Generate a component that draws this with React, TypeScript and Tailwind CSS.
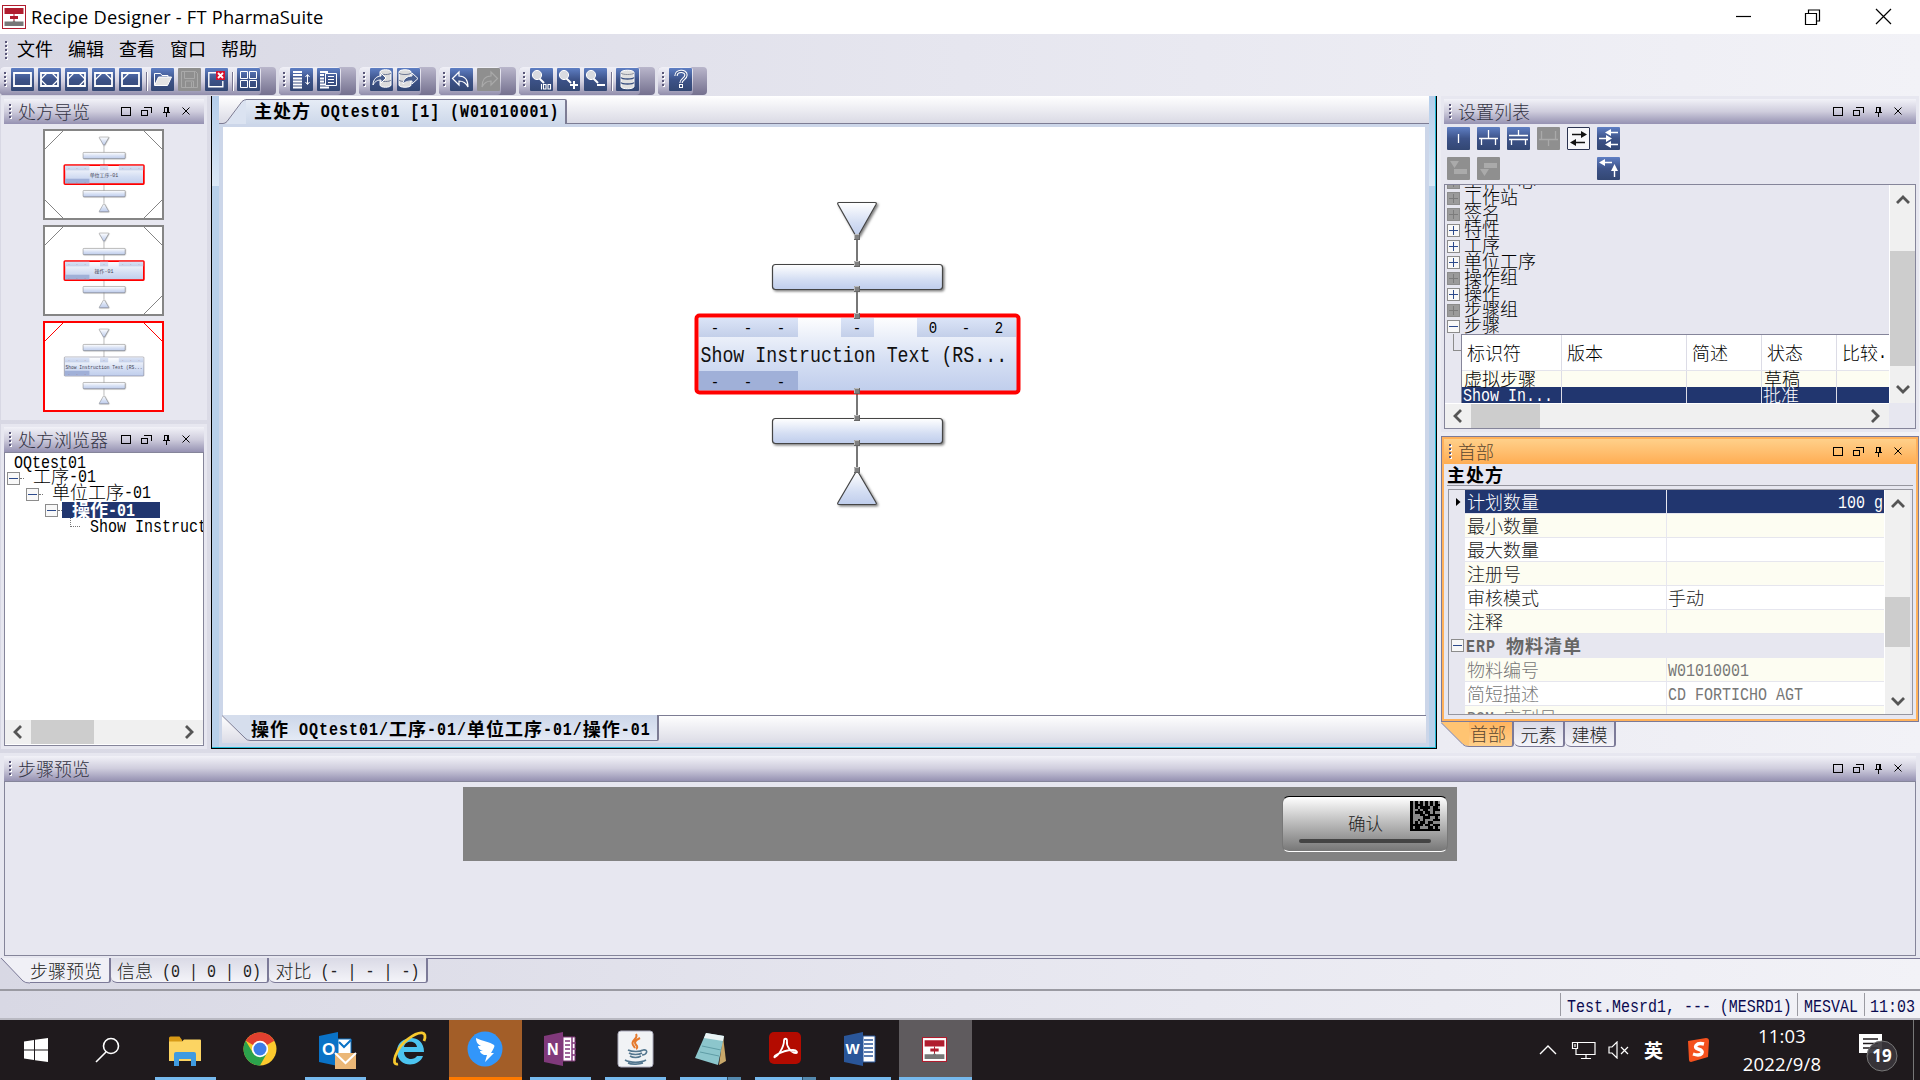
import React from "react";

const CJK_SPLIT = /([\u2e80-\u9fff\uff00-\uffef]+)/;

/* Mixed text: full-width glyphs at 1em, tall narrow half-width glyphs at exactly half of that advance. */
function T({ children }: { children: string }) {
  return (
    <span className="inline-block -translate-y-px whitespace-pre">
      {children.split(CJK_SPLIT).map((part, i) =>
        part === "" ? null : i % 2 === 1 ? (
          <span key={i}>{part}</span>
        ) : (
          <span
            key={i}
            className="inline-block origin-[50%_70%] -translate-y-px scale-y-[1.17] text-[0.8333em] font-['Liberation_Mono','Noto_Sans_CJK_SC',monospace]"
          >
            {part}
          </span>
        )
      )}
    </span>
  );
}

function Grip({ h = 18 }: { h?: number }) {
  return (
    <svg width="3" height={h} className="shrink-0" shapeRendering="crispEdges">
      {Array.from({ length: Math.floor(h / 4) }, (_, i) => (
        <g key={i}>
          <rect x="1" y={i * 4 + 1} width="2" height="2" fill="#fff" />
          <rect x="0" y={i * 4} width="2" height="2" fill="#5a5779" />
        </g>
      ))}
    </svg>
  );
}

function PanelControls() {
  return (
    <svg width="69" height="12" className="mr-[14px] shrink-0" fill="none" stroke="#000" shapeRendering="crispEdges">
      <rect x="0.5" y="1.5" width="9" height="8" />
      <path d="M20.5 4.5h6v5h-6zM23 1.5h7v5" />
      <path d="M42 6.5h7M43.5 6V1.5h4V6M46.5 1.5V6M45.5 7v4" />
      <path d="M61.5 1.5l7 7M68.5 1.5l-7 7" shapeRendering="auto" />
    </svg>
  );
}

function PanelHeader({ title, orange = false }: { title: string; orange?: boolean }) {
  return (
    <div
      className={
        "flex h-[25px] shrink-0 items-center pl-[5px] text-[18px] leading-[24px] " +
        (orange
          ? "bg-linear-to-b from-[#ffd08a] to-[#ffad52] text-[#5a4630]"
          : "bg-linear-to-b from-[#f2f2f8] via-[#cfcddd] to-[#9692b2] text-[#333344]")
      }
    >
      <Grip h={16} />
      <div className="ml-[6px] grow font-light">
        <T>{title}</T>
      </div>
      <PanelControls />
    </div>
  );
}

function Arrow({ dir, className = "" }: { dir: "left" | "right" | "up" | "down"; className?: string }) {
  const d = {
    left: "M9 1L3 7l6 6",
    right: "M4 1l6 6-6 6",
    up: "M1 10l6-6 6 6",
    down: "M1 4l6 6 6-6",
  }[dir];
  return (
    <svg width="14" height="14" className={"shrink-0 " + className} fill="none" stroke="#555" strokeWidth="2.8">
      <path d={d} />
    </svg>
  );
}

/* ---------- Toolbar ---------- */

const toolIcons: Record<string, React.ReactNode> = {
  rect: <path d="M3 5h17v13H3z" strokeWidth="1.8" />,
  corners4: (
    <>
      <path d="M3 5h17v13H3z" strokeWidth="1.8" />
      <path d="M3 11l6-6M14 5l6 6M20 12l-6 6M9 18l-6-6" strokeWidth="1.2" />
    </>
  ),
  corners3: (
    <>
      <path d="M3 5h17v13H3z" strokeWidth="1.8" />
      <path d="M3 11l6-6M14 5l6 6M20 12l-6 6" strokeWidth="1.2" />
    </>
  ),
  corners2: (
    <>
      <path d="M3 5h17v13H3z" strokeWidth="1.8" />
      <path d="M3 12l7-7M13 5l7 7" strokeWidth="1.2" />
    </>
  ),
  corners1: (
    <>
      <path d="M3 5h17v13H3z" strokeWidth="1.8" />
      <path d="M3 12l7-7" strokeWidth="1.2" />
    </>
  ),
  open: (
    <>
      <path d="M3.5 17V5.5h6l1.5 2h6v2" />
      <path d="M3.5 17.5l4-8.5h13l-4 8.5z" fill="#e4e4e4" />
    </>
  ),
  save: (
    <g stroke="#a9a9a9">
      <path d="M3.5 3.5h14l2 2v14h-16z" />
      <path d="M6.5 3.5v7h10v-7M7.5 19v-6h8v6M13.5 14v5" />
    </g>
  ),
  close: (
    <>
      <path d="M12 4.8H3.8v14h14V13" strokeWidth="1.4" />
      <rect x="11" y="3" width="9" height="9" fill="#d5122f" stroke="none" />
      <path d="M13 5l5 5M18 5l-5 5" strokeWidth="1.8" />
    </>
  ),
  grid: <path d="M3.5 3.5h7v7h-7zM12.5 3.5h7v7h-7zM3.5 12.5h7v7h-7zM12.5 12.5h7v7h-7z" />,
  sortList: (
    <>
      <path d="M3 4h9M3 7h9M3 10.5h9M3 13.5h9M3 16.5h9M3 19.5h9" strokeWidth="1.8" />
      <path d="M17.5 7v9M15.5 9l2-2.5 2 2.5M15.5 14l2 2.5 2-2.5" />
    </>
  ),
  copyList: (
    <>
      <path d="M3 4h8M3 7h4M3 10.5h4M3 13.5h4M3 16.5h5M3 19.5h9" strokeWidth="1.8" />
      <path d="M8.5 5.5h11v12h-11zM11 8.5h6M11 11.5h6M11 14.5h6" />
    </>
  ),
  dbIn: (
    <>
      <path d="M10 4v13c0 3 11 3 11 0V4c0-3-11-3-11 0z" fill="#dcdcdc" />
      <path d="M10 5c1 2 10 2 11 0M10 12c1 2 10 2 11 0" stroke="#6d7894" />
      <path d="M3 17c0-6 4-9 8-9V5l5 5-5 5v-3c-3 0-6 1-8 5z" fill="#4a5f8f" />
    </>
  ),
  dbOut: (
    <>
      <path d="M2 4v13c0 3 12 3 12 0V4c0-3-12-3-12 0z" fill="#dcdcdc" />
      <path d="M2 5c1 2 11 2 12 0M2 12c1 2 11 2 12 0" stroke="#6d7894" />
      <path d="M6 16c0-5 4-8 9-8V5l6 5.5-6 5.5v-3c-3 0-6 0-9 3z" fill="#4a5f8f" />
    </>
  ),
  undo: <path d="M2.5 10.5L9 4v4c6 0 9 4 9 11-2-4-4-6-9-6v4z" strokeWidth="1.2" />,
  redo: <path d="M20.5 10.5L14 4v4c-6 0-9 4-9 11 2-4 4-6 9-6v4z" stroke="#a9a9a9" strokeWidth="1.2" />,
  zoom100: (
    <>
      <path d="M9 10l5 5" strokeWidth="2" />
      <circle cx="7" cy="7" r="4.6" fill="#d9dbe0" />
      <path d="M11.5 16v5.5M13.5 16.5h2.5v4.5h-2.5zM18 16.5h2.5v4.5h-2.5z" strokeWidth="1.1" />
    </>
  ),
  zoomIn: (
    <>
      <path d="M9 10l5 5" strokeWidth="2" />
      <circle cx="7" cy="7" r="4.6" fill="#d9dbe0" />
      <path d="M17 13v8M13 17h8" strokeWidth="2" />
    </>
  ),
  zoomOut: (
    <>
      <path d="M9 10l5 5" strokeWidth="2" />
      <circle cx="7" cy="7" r="4.6" fill="#d9dbe0" />
      <path d="M13 17h8" strokeWidth="2" />
    </>
  ),
  db: (
    <>
      <path d="M5 4.5v14c0 3 13 3 13 0v-14c0-3-13-3-13 0z" fill="#e0e0e0" />
      <path d="M5 5c1 2 12 2 13 0" stroke="#8a8f9c" />
      <path d="M5 9.5c1 2 12 2 13 0M5 14.5c1 2 12 2 13 0" stroke="#3c5282" strokeWidth="1.3" />
    </>
  ),
  help: (
    <>
      <path d="M7 8c0-6 10-6 10-1 0 4-5 4-5 8" strokeWidth="3.4" />
      <path d="M7 8c0-6 10-6 10-1 0 4-5 4-5 8" strokeWidth="1.2" stroke="#40578c" />
      <rect x="10.5" y="16.5" width="3" height="3" />
    </>
  ),
  tBar: <path d="M11.5 7v9" strokeWidth="1.3" />,
  tFork: <path d="M11.5 3v8M2 11.5h19M4.5 11v7M18.5 11v7" strokeWidth="1.3" />,
  tFork2: <path d="M11.5 3v5M2 8.5h19M2 12.5h19M4.5 12v6M18.5 12v6" strokeWidth="1.3" />,
  tJoin: <path d="M4.5 4v8M18.5 4v8M2 12.5h19M11.5 12v7" strokeWidth="1.3" stroke="#a9a9a9" />,
  swap: (
    <g stroke="#111" fill="#111">
      <path d="M5 7.5h10M18 15.5H9" strokeWidth="1.6" />
      <path d="M14 4l6 3.5-6 3.5zM9 12l-6 3.5 6 3.5z" stroke="none" />
    </g>
  ),
  merge: (
    <g>
      <path d="M13 5.5h8M2 11.5h8M13 17.5h8" strokeWidth="1.4" />
      <path d="M14 2l-6 3.5 6 3.5zM9 8l6 3.5-6 3.5zM14 14l-6 3.5 6 3.5z" fill="#fff" stroke="none" />
    </g>
  ),
  turn: (
    <g>
      <path d="M7 5.5h8M17.5 12v8" strokeWidth="1.4" />
      <path d="M8 2L2 5.5 8 9zM14 14l3.5-7 3.5 7z" fill="#fff" stroke="none" />
    </g>
  ),
  triBox: <path d="M3 4h9l-4.5 7zM7 12h13v5H7z" fill="#aaa" stroke="none" />,
  boxTri: <path d="M7 6h13v5H7zM3 12h9l-4.5 7z" fill="#aaa" stroke="none" />,
};

function Tool({ icon, kind = "blue" }: { icon: string; kind?: "blue" | "gray" | "white" }) {
  const bg = {
    blue: "bg-linear-to-b from-[#5f7fc4] via-[#3d5389] to-[#334773]",
    gray: "bg-[#8f8f8f]",
    white: "bg-[#f7f7fa] border border-[#2b3350]",
  }[kind];
  return (
    <div className={"flex h-[23px] w-[23px] shrink-0 items-center justify-center overflow-hidden rounded-[1px] " + bg}>
      <svg width="23" height="23" className="shrink-0" fill="none" stroke="#fff" strokeWidth="1">
        {toolIcons[icon]}
      </svg>
    </div>
  );
}

function ToolGroup({ children, tail = "w-[13px]" }: { children: React.ReactNode; tail?: string }) {
  return (
    <div className="mr-[3px] flex h-[28px] shrink-0 rounded-[4px] bg-linear-to-b from-[#b9b6cb] to-[#75718f]">
      <div className="flex rounded-[4px] bg-linear-to-b from-[#f0f0f7] via-[#d5d3e2] to-[#928eac] pt-px">
        <div className="mt-1 ml-[4px] mr-[4px]">
          <Grip h={18} />
        </div>
        <div className="flex gap-1 pr-px">{children}</div>
      </div>
      <div className={tail} />
    </div>
  );
}

function ToolSep() {
  return <div className="-mr-px mt-1 h-[19px] w-[2px] border-l border-[#77748f] bg-white" />;
}

/* ---------- Recipe diagram ---------- */

function Shapes({ id, selected, label, small }: { id: string; selected: boolean; label: string; small?: boolean }) {
  const g = `url(#${id}g)`;
  const cells = [
    [715, 327, "-"],
    [748, 327, "-"],
    [781, 327, "-"],
    [857, 327, "-"],
    [933, 327, small ? "-" : "0"],
    [966, 327, "-"],
    [999, 327, small ? "-" : "2"],
    [715, 381, "-"],
    [748, 381, "-"],
    [781, 381, "-"],
  ] as const;
  return (
    <g>
      <defs>
        <linearGradient id={id + "g"} x1="0" y1="0" x2="0" y2="1">
          <stop offset="0" stopColor="#fff" />
          <stop offset="0.6" stopColor="#d4def3" />
          <stop offset="1" stopColor="#bfcdec" />
        </linearGradient>
        <linearGradient id={id + "c"} x1="0" y1="0" x2="0" y2="1">
          <stop offset="0" stopColor="#dbe4f7" />
          <stop offset="1" stopColor="#c3cfe9" />
        </linearGradient>
        <filter id={id + "s"} x="-10%" y="-20%" width="120%" height="150%">
          <feDropShadow dx="1.5" dy="1.5" stdDeviation="1" floodOpacity="0.5" />
        </filter>
      </defs>
      <g fill={g} stroke="#444" strokeWidth="1.2" filter={`url(#${id}s)`}>
        <path d="M839 202.5h36q2 0 1 2l-17 30q-2 3-4 0l-17-30q-1-2 1-2z" />
        <rect x="772.5" y="264.5" width="170" height="25" rx="3" />
        <rect x="772.5" y="418.5" width="170" height="25" rx="3" />
        <path d="M839 504.5h36q2 0 1-2l-17-29q-2-3-4 0l-17 29q-1 2 1 2z" />
      </g>
      <path d="M857 236v28M857 290v26M857 391v28M857 443v28" stroke="#777" strokeWidth="2" />
      <rect
        x="696.5"
        y="315.5"
        width="322"
        height="77"
        rx="3"
        fill={g}
        stroke={selected ? "#f00" : "#667"}
        strokeWidth={selected ? (small ? 7 : 4) : 2}
      />
      <g fill={`url(#${id}c)`}>
        <rect x="699" y="318" width="99" height="19" />
        <rect x="841" y="318" width="33" height="19" />
        <rect x="917" y="318" width="99" height="19" />
      </g>
      <rect x="699" y="371" width="99" height="19" fill="#a0b0d8" />
      <g fontFamily="'Liberation Mono','Noto Sans CJK SC',monospace" fill="#111">
        {cells.map(([x, y, s], i) => (
          <text
            key={i}
            transform={`translate(${x} ${y + 6}) scale(1 1.15)`}
            fontSize="14"
            textAnchor="middle"
            fill={small ? "#a66" : "#000"}
          >
            {s}
          </text>
        ))}
        {small ? (
          <text x="857" y="362" fontSize={label.length > 12 ? 18.6 : 20} textAnchor="middle" fill="#445">
            {label}
          </text>
        ) : (
          <text transform="translate(700.5 362) scale(1 1.17)" fontSize="18.25">
            {label}
          </text>
        )}
      </g>
      {!small &&
        [237, 264, 289, 316, 391, 418, 443, 470].map((y) => (
          <g key={y}>
            <rect x="854.5" y={y - 2.5} width="5" height="5" fill="#808080" stroke="#666" />
            <path d={`M854.5 ${y + 2}v-4.5h4.5`} stroke="#bbb" fill="none" />
          </g>
        ))}
    </g>
  );
}

function Thumb({ id, label, corners, selected }: { id: string; label: string; corners: string; selected?: boolean }) {
  return (
    <div className={"h-[91px] w-[121px] border-2 bg-white " + (selected ? "border-[#ff0000]" : "border-[#858585]")}>
      <svg width="117" height="87" viewBox="2 2 117 87">
        <path d={corners} stroke={selected ? "#f00" : "#858585"} fill="none" />
        <g transform="translate(-150.7 -41.9) scale(0.247)">
          <Shapes id={id} label={label} selected={!selected} small />
        </g>
      </svg>
    </div>
  );
}

/* ---------- Trees and grids ---------- */

function Box({ kind }: { kind: "plus" | "minus" | "off" }) {
  return (
    <svg width="13" height="13" className="shrink-0" shapeRendering="crispEdges">
      <rect x="0.5" y="0.5" width="12" height="12" fill={kind === "off" ? "#9b9b9b" : "#f8f8f8"} stroke="#8c8c8c" />
      <path d={kind === "minus" ? "M2 6.5h9" : "M2 6.5h9M6.5 2v9"} stroke={kind === "off" ? "#7c7c7c" : "#2c4a8c"} />
    </svg>
  );
}

const treeRows: [string, "plus" | "minus" | "off"][] = [
  ["工作中心", "off"],
  ["工作站", "off"],
  ["签名", "off"],
  ["特性", "plus"],
  ["工序", "plus"],
  ["单位工序", "plus"],
  ["操作组", "off"],
  ["操作", "plus"],
  ["步骤组", "off"],
  ["步骤", "minus"],
];

const props: [string, string][] = [
  ["最小数量", ""],
  ["最大数量", ""],
  ["注册号", ""],
  ["审核模式", "手动"],
  ["注释", ""],
];

function PropRow({ name, value, tint, gray }: { name: string; value: string; tint: boolean; gray?: boolean }) {
  const bg = tint ? "bg-[#fdfdf2]" : "bg-white";
  return (
    <div className={"flex h-[24px] shrink-0 gap-px border-b border-[#e6e6ee] " + (gray ? "text-[#777]" : "text-[#222]")}>
      <div className={"w-[201px] pl-[2px] " + bg}>
        <T>{name}</T>
      </div>
      <div className={"grow pl-px " + bg}>
        <T>{value}</T>
      </div>
    </div>
  );
}

function SmallTab({ label, w, active }: { label: string; w: string; active?: boolean }) {
  return (
    <div
      className={
        "h-[25px] shrink-0 rounded-br-[3px] border-r-2 border-b border-[#7c7a98] text-center text-[18px] leading-[26px] font-light text-[#222] " +
        w +
        (active ? " bg-[#f0f0f6]" : " rounded-bl-[6px] bg-linear-to-b from-[#dadae6] to-[#f4f4f9]")
      }
    >
      <T>{label}</T>
    </div>
  );
}

/* ---------- Taskbar ---------- */

function RecipeLogo({ size }: { size: number }) {
  return (
    <svg width={size} height={size} viewBox="0 0 24 24">
      <rect x="0.5" y="0.5" width="23" height="23" fill="#fff" stroke="#b01c2e" />
      <path d="M2.5 3h19v6h-19zM8 11h8v3H8z" fill="#b01c2e" />
      <path d="M11.5 9h1v8h-1z" fill="#b01c2e" />
      <path d="M2.5 16.5h8l1.5-1 1.5 1h8V21h-19z" fill="#777" />
    </svg>
  );
}

const F = "Liberation Sans";
const taskIcons: Record<string, React.ReactNode> = {
  folder: (
    <>
      <path d="M1 6q0-1.5 1.5-1.5h9L14 8v3H1z" fill="#d89a16" />
      <path d="M1 9.5h13l2-2h16q1 0 1 1V29H1z" fill="#fcd462" />
      <path d="M6 34V22q0-2 2-2h18q2 0 2 2v12h-5v-7H11v7z" fill="#3f9be0" />
    </>
  ),
  chrome: (
    <>
      <circle cx="17" cy="17" r="16.5" fill="#fbc92d" />
      <path d="M17 17L2.7 8.8A16.5 16.5 0 0131.3 8.8z" fill="#e0402f" />
      <path d="M2.7 8.8A16.5 16.5 0 0017 33.5l7-12.4-7 3-7-3z" fill="#2ba24c" />
      <circle cx="17" cy="17" r="8.2" fill="#fff" />
      <circle cx="17" cy="17" r="6.5" fill="#3d7de8" />
    </>
  ),
  outlook: (
    <>
      <path d="M1 4l19-4v34L1 30z" fill="#0a72c6" />
      <path d="M20 7h13v18H20z" fill="#fff" stroke="#0a72c6" />
      <path d="M21 10l5 5 7-7" stroke="#0a72c6" strokeWidth="2" fill="none" />
      <text x="4" y="23" fontSize="17" fontWeight="bold" fill="#fff" fontFamily={F}>O</text>
      <path d="M17 21h21v16H17z" fill="#ebb777" />
      <path d="M17 21l10.5 10L38 21" stroke="#fff" strokeWidth="2" fill="none" />
    </>
  ),
  ie: (
    <>
      <path d="M31 20H11c0 8 10 9 13 4h6C26 36 4 36 4 19 4 3 31 0 31 20zM11 15h13c-1-7-12-7-13 0z" fill="#4cc4f0" />
      <path d="M5 32C-3 34 3 16 15 7S35-1 31 9" stroke="#f7c92e" strokeWidth="2.8" fill="none" />
    </>
  ),
  ding: (
    <>
      <circle cx="17" cy="17" r="17.5" fill="#3296fa" />
      <path d="M8 6c6 3 14 4 18 7 1 1 0 3-3 8h3L17 30l2-7h-3c-3-1-4-3-4-4l3 0c-4-1-5-4-5-5h3C9 12 8 9 8 6z" fill="#fff" />
    </>
  ),
  onenote: (
    <>
      <path d="M1 4l19-4v34L1 30z" fill="#80397b" />
      <path d="M20 5h12v24H20z" fill="#fff" stroke="#80397b" />
      <path d="M22 9h5M22 13h5M22 17h5M22 21h5M22 25h5M29 5v24M29 11h4M29 17h4M29 23h4" stroke="#80397b" strokeWidth="1.5" />
      <text x="4" y="23" fontSize="16" fontWeight="bold" fill="#fff" fontFamily={F}>N</text>
    </>
  ),
  java: (
    <>
      <rect x="0" y="-1" width="35" height="36" rx="3" fill="#f1f3f5" stroke="#aab" />
      <path d="M18 2c3 5-6 6-3 11l2 3M22 6c-6 3-6 5-3 8 1 2-1 3-1 3" stroke="#e57a2d" strokeWidth="2" fill="none" />
      <path d="M10 18c4 2 12 2 15 0M11 21c3 2 10 2 13 0M12 24c3 2 8 2 11 0M7 28c5 3 16 3 21 0M25 18c6-1 4 5-1 5M10 31c4 2 12 1 15 0" stroke="#54778f" strokeWidth="1.6" fill="none" />
    </>
  ),
  notepad: (
    <>
      <path d="M30 4l3 25-7 4z" fill="#c9a86a" />
      <path d="M13 1l18 3-6 29L2 26z" fill="#8cc6cc" />
      <path d="M13 1l18 3-1 5-19-3z" fill="#e9f3f4" />
      <path d="M9 14l19 4M7 20l19 4" stroke="#5f9da6" fill="none" />
    </>
  ),
  adobe: (
    <>
      <rect x="1" y="0" width="32" height="32" rx="5" fill="#b30b00" />
      <path d="M7 25c3-1 9-10 9-16 0-3 3-3 3 0-1 5 4 12 9 12 2 0 1-3-3-3-6 0-12 2-17 5-2 1-2 3-1 2z" stroke="#fff" strokeWidth="1.8" fill="none" />
    </>
  ),
  word: (
    <>
      <path d="M1 4l19-4v34L1 30z" fill="#2a5699" />
      <path d="M20 4h12v26H20z" fill="#fff" stroke="#2a5699" />
      <path d="M21 8h9M21 12h9M21 16h9M21 20h9M21 24h9" stroke="#2a5699" strokeWidth="1.7" />
      <text x="2.5" y="22" fontSize="15" fontWeight="bold" fill="#fff" fontFamily={F}>W</text>
    </>
  ),
};

const tasks: { icon: string; bar: "none" | "line" | "split" | "orange" | "active" }[] = [
  { icon: "folder", bar: "line" },
  { icon: "chrome", bar: "none" },
  { icon: "outlook", bar: "line" },
  { icon: "ie", bar: "none" },
  { icon: "ding", bar: "orange" },
  { icon: "onenote", bar: "line" },
  { icon: "java", bar: "line" },
  { icon: "notepad", bar: "split" },
  { icon: "adobe", bar: "split" },
  { icon: "word", bar: "line" },
  { icon: "recipe", bar: "active" },
];

function Task({ icon, bar }: (typeof tasks)[number]) {
  const bg = bar === "orange" ? "bg-[#a35e28]" : bar === "active" ? "bg-[#5f5b5e]" : "";
  return (
    <div className="flex h-full w-[75px] justify-center">
      <div className={"flex h-full w-[73px] flex-col items-center " + bg}>
        <div className="flex h-[57px] items-center justify-center pt-px pr-[2px]">
          {icon === "recipe" ? (
            <RecipeLogo size={25} />
          ) : (
            <svg width="34" height="34" className="overflow-visible">
              {taskIcons[icon]}
            </svg>
          )}
        </div>
        {bar === "line" && <div className="h-[3px] w-[61px] bg-[#76b9ed]" />}
        {bar === "split" && (
          <div className="flex h-[3px] w-[61px] bg-[#76b9ed]">
            <div className="ml-[47px] w-[14px] border-l border-[#2c4a60] bg-[#5489ae]" />
          </div>
        )}
        {bar === "orange" && <div className="h-[3px] w-full bg-[#ff7a00]" />}
        {bar === "active" && <div className="h-[3px] w-full bg-[#76b9ed]" />}
      </div>
    </div>
  );
}

const MATRIX = [
  "101010101010",
  "101110101011",
  "101011110110",
  "100101100111",
  "101110110100",
  "100011011111",
  "100001110010",
  "100101000111",
  "101011011000",
  "111110110111",
  "101100011010",
  "111111111111",
];

export default function App() {
  return (
    <div className="flex h-[1080px] w-[1920px] flex-col overflow-hidden bg-linear-to-r from-[#d8d8e4] via-[#e6e6ef] to-[#f2f2f7] font-['Noto_Sans_CJK_SC',sans-serif] text-[18px] text-black">
      {/* Title bar */}
      <div className="flex h-[34px] shrink-0 items-center bg-white pl-[2px]">
        <RecipeLogo size={24} />
        <div className="ml-[5px] grow font-['Open_Sans',sans-serif] text-[18.3px] leading-[34px] tracking-[0.2px]">
          Recipe Designer - FT PharmaSuite
        </div>
        <svg width="160" height="20" className="mr-[28px]" fill="none" stroke="#000" strokeWidth="1.2">
          <path d="M4 9.5h15" />
          <path d="M73.5 6.5h11v11h-11zM76.5 6v-3h11v11h-3" />
          <path d="M144 2l15 15M159 2l-15 15" />
        </svg>
      </div>

      {/* Menu bar */}
      <div className="flex h-[33px] shrink-0 items-center pl-[5px] text-[18px] leading-[28px]">
        <Grip h={20} />
        <div className="ml-[9px] flex gap-[15px] pb-[5px]">
          {["文件", "编辑", "查看", "窗口", "帮助"].map((m) => (
            <span key={m}>{m}</span>
          ))}
        </div>
      </div>

      {/* Toolbar */}
      <div className="flex h-[29px] shrink-0">
        <ToolGroup tail="w-[15px]">
          <Tool icon="rect" />
          <Tool icon="corners4" />
          <Tool icon="corners3" />
          <Tool icon="corners2" />
          <Tool icon="corners1" />
          <ToolSep />
          <Tool icon="open" />
          <Tool icon="save" kind="gray" />
          <Tool icon="close" />
          <ToolSep />
          <Tool icon="grid" />
        </ToolGroup>
        <ToolGroup tail="w-[15px]">
          <Tool icon="sortList" />
          <Tool icon="copyList" />
        </ToolGroup>
        <ToolGroup tail="w-[15px]">
          <Tool icon="dbIn" />
          <Tool icon="dbOut" />
        </ToolGroup>
        <ToolGroup tail="w-[15px]">
          <Tool icon="undo" />
          <Tool icon="redo" kind="gray" />
        </ToolGroup>
        <ToolGroup tail="w-[15px]">
          <Tool icon="zoom100" />
          <Tool icon="zoomIn" />
          <Tool icon="zoomOut" />
          <ToolSep />
          <Tool icon="db" />
        </ToolGroup>
        <ToolGroup tail="w-[14px]">
          <Tool icon="help" />
        </ToolGroup>
      </div>

      {/* Workspace */}
      <div className="flex h-[653px] shrink-0">
        {/* Left column */}
        <div className="flex w-[207px] shrink-0 flex-col gap-[4px] pl-px">
          <div className="flex h-[324px] flex-col bg-[#e7e7f0] px-[3px] pt-[3px]">
            <PanelHeader title="处方导览" />
            <div className="mt-[5px] flex flex-col items-center gap-[5px] pr-px">
              <Thumb id="a" label="单位工序-01" corners="M2 20L20 2M101 2l18 18M2 71l18 18M101 89l18-18" />
              <Thumb id="b" label="操作-01" corners="M2 20L20 2M101 2l18 18M101 89l18-18" />
              <Thumb id="c" label="Show Instruction Text (RS..." corners="M2 20L20 2M101 2l18 18" selected />
            </div>
          </div>
          <div className="flex h-[325px] flex-col bg-[#e7e7f0] px-[3px] pt-[3px]">
            <PanelHeader title="处方浏览器" />
            <div className="flex h-[294px] flex-col border border-[#85859a] bg-white text-[18px] leading-[16px]">
              <div className="h-[267px] overflow-hidden pt-px font-light">
                <div className="h-[16px] pl-[9px]">
                  <T>OQtest01</T>
                </div>
                <div className="flex h-[16px] items-center pl-[2px]">
                  <Box kind="minus" />
                  <div className="w-[4px] border-b border-dotted border-[#777]" />
                  <span className="ml-[9px]"><T>工序-01</T></span>
                </div>
                <div className="flex h-[16px] items-center pl-[21px]">
                  <Box kind="minus" />
                  <div className="w-[4px] border-b border-dotted border-[#777]" />
                  <span className="ml-[9px]"><T>单位工序-01</T></span>
                </div>
                <div className="flex h-[16px] items-center pl-[40px]">
                  <Box kind="minus" />
                  <div className="w-[4px] border-b border-dotted border-[#777]" />
                  <div className="h-[16px] w-[98px] bg-[#21366f] pl-[10px] font-bold text-white">
                    <T>操作-01</T>
                  </div>
                </div>
                <div className="flex h-[16px] pl-[65px]">
                  <div className="h-[9px] w-[10px] shrink-0 border-b border-l border-dotted border-[#777]" />
                  <span className="ml-[10px] shrink-0"><T>Show Instruction Text</T></span>
                </div>
              </div>
              <div className="flex h-[24px] shrink-0 items-center bg-[#f0f0f0] pl-[7px]">
                <Arrow dir="left" />
                <div className="ml-[5px] h-full w-[63px] bg-[#cdcdcd]" />
                <Arrow dir="right" className="ml-auto mr-[7px]" />
              </div>
            </div>
          </div>
        </div>

        {/* Editor */}
        <div className="ml-[4px] flex w-[1226px] shrink-0 border-x border-b border-black">
          <div className="w-[7px] shrink-0 border-b border-[#21b8d4] bg-[#b8d0ea]">
            <div className="h-[90px] bg-linear-to-b from-[#b4cdea] to-[#dbe8f6]" />
          </div>
          <div className="flex grow flex-col border-b border-[#21b8d4] bg-[#ccd6e9]">
            <div className="flex h-[31px] shrink-0 flex-col">
              <div className="h-[28px] bg-linear-to-b from-white to-[#d9d9e4]">
                <div className="flex h-[28px] items-end">
                  <svg width="27" height="25" className="shrink-0">
                    <path d="M0 25h7L24 2q2-2 4-2v25z" fill="#dbe3f1" />
                    <path d="M0 24.5h4q2 0 4-2L23 2.5q2-2 5-2" stroke="#7c7c94" fill="none" />
                  </svg>
                  <div className="h-[25px] w-[321px] shrink-0 rounded-tr-[2px] border-t border-r-2 border-[#7c7c94] bg-linear-to-b from-[#e6ecf6] to-[#cdd8ea] pl-[8px] text-[18px] leading-[23px] font-bold tracking-[0.95px]">
                    <T>主处方 OQtest01 [1] (W01010001)</T>
                  </div>
                  <div className="h-[25px] grow border-b border-[#7c7c94]" />
                </div>
              </div>
            </div>
            <div className="mx-[4px] h-[588px] shrink-0 bg-white">
              <svg width="1202" height="588" viewBox="223 127 1202 588">
                <Shapes id="m" label="Show Instruction Text (RS..." selected />
              </svg>
            </div>
            <div className="mx-[3px] flex h-[28px] shrink-0 bg-linear-to-b from-white to-[#dcdce6]">
              <svg width="28" height="26" className="shrink-0">
                <path d="M0 0l24 24q1 1 4 1V0z" fill="#d6deed" />
                <path d="M0 .5l23 22.5q2 2.5 5 2.5" stroke="#7c7c94" fill="none" />
              </svg>
              <div className="h-[26px] w-[409px] shrink-0 rounded-br-[2px] border-r-2 border-b border-[#7c7c94] bg-linear-to-b from-[#ccd6e9] to-[#e4eaf5] pl-px text-[18px] leading-[28px] font-bold tracking-[1px]">
                <T>操作 OQtest01/工序-01/单位工序-01/操作-01</T>
              </div>
              <div className="h-px grow bg-[#7c7c94]" />
            </div>
          </div>
          <div className="w-[7px] shrink-0 border-r border-b border-[#21b8d4] bg-[#b8d0ea]">
            <div className="h-[90px] bg-linear-to-b from-[#b4cdea] to-[#dbe8f6]" />
          </div>
        </div>

        {/* Right column */}
        <div className="ml-[4px] flex w-[478px] shrink-0 flex-col">
          <div className="flex h-[336px] flex-col bg-[#e7e7f0] px-[3px] pt-[3px]">
            <PanelHeader title="设置列表" />
            <div className="flex h-[60px] shrink-0 flex-col gap-[7px] pt-[3px] pl-[3px]">
              <div className="flex gap-[7px]">
                <Tool icon="tBar" />
                <Tool icon="tFork" />
                <Tool icon="tFork2" />
                <Tool icon="tJoin" kind="gray" />
                <Tool icon="swap" kind="white" />
                <Tool icon="merge" />
              </div>
              <div className="flex gap-[7px]">
                <Tool icon="triBox" kind="gray" />
                <Tool icon="boxTri" kind="gray" />
                <div className="ml-[90px]">
                  <Tool icon="turn" />
                </div>
              </div>
            </div>
            <div className="flex h-[245px] shrink-0 flex-col border border-[#85859a]">
              <div className="flex h-[218px] shrink-0">
                <div className="flex w-[444px] shrink-0 flex-col justify-end overflow-hidden">
                  {treeRows.map(([label, kind]) => (
                    <div key={label} className="flex h-[16px] shrink-0 items-center gap-[4px] pl-[2px] text-[18px] leading-[16px] font-light">
                      <Box kind={kind} />
                      <div className="pb-[2px]">
                        <T>{label}</T>
                      </div>
                    </div>
                  ))}
                  <div className="flex h-[69px] shrink-0">
                    <div className="ml-[8px] h-[17px] w-[8px] shrink-0 border-b border-l border-[#8c8c8c]" />
                    <div className="flex grow flex-col overflow-hidden border-t border-l border-[#85859a] text-[18px] font-light">
                      <div className="flex h-[36px] shrink-0 border-b border-[#e4e4ec] bg-white leading-[37px]">
                        <div className="w-[100px] shrink-0 border-r border-[#dcdce6] pl-[5px]"><T>标识符</T></div>
                        <div className="w-[125px] shrink-0 border-r border-[#dcdce6] pl-[5px]"><T>版本</T></div>
                        <div className="w-[75px] shrink-0 border-r border-[#dcdce6] pl-[5px]"><T>简述</T></div>
                        <div className="w-[75px] shrink-0 border-r border-[#dcdce6] pl-[5px]"><T>状态</T></div>
                        <div className="shrink-0 pl-[5px]"><T>比较...</T></div>
                      </div>
                      <div className="flex h-[16px] shrink-0 bg-[#fdfdf2] leading-[16px]">
                        <div className="w-[100px] shrink-0 border-r border-[#dcdce6] pl-[2px]"><T>虚拟步骤</T></div>
                        <div className="w-[125px] shrink-0 border-r border-[#dcdce6]" />
                        <div className="w-[75px] shrink-0 border-r border-[#dcdce6]" />
                        <div className="w-[75px] shrink-0 border-r border-[#dcdce6] pl-[2px]"><T>草稿</T></div>
                      </div>
                      <div className="flex h-[16px] shrink-0 overflow-hidden bg-[#21366f] leading-[16px] text-white">
                        <div className="w-[100px] shrink-0 border-r border-[#dcdce6] pl-px"><T>Show In...</T></div>
                        <div className="w-[125px] shrink-0 border-r border-[#dcdce6]" />
                        <div className="w-[75px] shrink-0 border-r border-[#dcdce6]" />
                        <div className="w-[75px] shrink-0 border-r border-[#dcdce6] pl-px"><T>批准</T></div>
                      </div>
                    </div>
                  </div>
                </div>
                <div className="flex w-[26px] shrink-0 flex-col items-center border-l border-white bg-[#f0f0f0]">
                  <Arrow dir="up" className="mt-[8px]" />
                  <div className="mt-[44px] h-[115px] w-full bg-[#cdcdcd]" />
                  <Arrow dir="down" className="mt-[16px]" />
                </div>
              </div>
              <div className="flex h-[25px] w-[444px] items-center border-t border-white bg-[#f0f0f0] pl-[7px]">
                <Arrow dir="left" />
                <div className="ml-[5px] h-full w-[69px] bg-[#cdcdcd]" />
                <Arrow dir="right" className="ml-auto mr-[7px]" />
              </div>
            </div>
          </div>

          <div className="mt-[4px] h-[286px] shrink-0 border border-[#7c7a98] bg-[#ffb15a] p-[2px]">
            <PanelHeader title="首部" orange />
            <div className="flex h-[255px] flex-col bg-[#e7e7f0] px-[3px]">
              <div className="h-[22px] shrink-0 border-b border-[#96969f] text-[18px] leading-[22px] font-bold tracking-[1px]">
                <T>主处方</T>
              </div>
              <div className="mt-[3px] ml-[1px] flex h-[226px] shrink-0 border border-[#96969f]">
                <div className="w-[16px] shrink-0 pt-[8px] pl-[7px]">
                  <svg width="5" height="8">
                    <path d="M0 0l4.5 4L0 8z" fill="#000" />
                  </svg>
                </div>
                <div className="flex w-[419px] shrink-0 flex-col overflow-hidden text-[18px] leading-[24px] font-light">
                  <div className="flex h-[24px] shrink-0 gap-px border-b border-[#e6e6ee] text-white">
                    <div className="w-[201px] bg-[#21366f] pl-[2px]"><T>计划数量</T></div>
                    <div className="grow bg-[#21366f] pr-px text-right"><T>100 g</T></div>
                  </div>
                  {props.map(([n, v], i) => (
                    <PropRow key={n} name={n} value={v} tint={i % 2 === 0} />
                  ))}
                  <div className="h-[24px] shrink-0 pl-px font-bold tracking-[1px] text-[#666]">
                    <T>ERP 物料清单</T>
                  </div>
                  <PropRow name="物料编号" value="W01010001" tint gray />
                  <PropRow name="简短描述" value="CD FORTICHO AGT" tint={false} gray />
                  <PropRow name="BOM 序列号" value="" tint gray />
                </div>
                <div className="flex w-[26px] shrink-0 flex-col items-center border-l border-white bg-[#f0f0f0]">
                  <Arrow dir="up" className="mt-[7px]" />
                  <div className="mt-[86px] h-[50px] w-full bg-[#cdcdcd]" />
                  <Arrow dir="down" className="mt-[47px]" />
                </div>
              </div>
              <div className="relative h-0">
                <div className="absolute -top-[76px] left-[4px] leading-[0px]">
                  <Box kind="minus" />
                </div>
              </div>
            </div>
          </div>
          <div className="flex">
            <svg width="28" height="25" className="shrink-0">
              <path d="M0 0l22 22q2 2 6 2V0z" fill="#ffc472" />
              <path d="M0 .5l22 22q2 2 6 2" stroke="#7c7a98" fill="none" />
            </svg>
            <div className="h-[25px] w-[45px] rounded-br-[3px] border-r-2 border-b border-[#7c7a98] bg-linear-to-b from-[#ffb45e] to-[#ffd08a] pl-px leading-[25px] font-light text-[#5a4630]">
              <T>首部</T>
            </div>
            <SmallTab label="元素" w="w-[51px]" />
            <SmallTab label="建模" w="w-[51px]" />
          </div>
        </div>
      </div>

      {/* Step preview */}
      <div className="mt-[4px] flex h-[205px] shrink-0 flex-col bg-[#e7e7f0] px-[4px] pt-[3px]">
        <PanelHeader title="步骤预览" />
        <div className="flex h-[175px] justify-center border border-[#85859a] pt-[5px]">
          <div className="flex h-[74px] w-[994px] justify-end bg-[#828282] pt-[9px] pr-[9px]">
            <div className="relative h-[56px] w-[166px] rounded-[7px] border border-t-black border-r-[#777] border-b-white border-l-[#777] bg-linear-to-b from-white to-[#777]">
              <div className="pt-[14px] pl-[65px] text-[17.5px] leading-[26px] font-light text-[#222]">
                <T>确认</T>
              </div>
              <div className="mt-[2px] ml-[16px] h-[4px] w-[132px] rounded-[2px] bg-[#444]" />
              <svg width="30" height="30" viewBox="0 0 12 12" className="absolute top-[4px] right-[7px] bg-[#8a8a8a]" shapeRendering="crispEdges">
                {MATRIX.map((row, y) =>
                  row.split("").map((c, x) => (c === "1" ? <rect key={`${x}-${y}`} x={x} y={y} width="1" height="1" /> : null))
                )}
              </svg>
            </div>
          </div>
        </div>
      </div>
      <div className="flex h-[33px] shrink-0 border-b-2 border-[#9a9aa2]">
        <svg width="30" height="26" className="shrink-0">
          <path d="M2 0l21 23q2 2 7 2V0z" fill="#f0f0f6" />
          <path d="M1 0l22 23q2 2 7 2" stroke="#7c7a98" fill="none" />
        </svg>
        <SmallTab label="步骤预览" w="w-[81px] text-left!" active />
        <SmallTab label="信息 (0 | 0 | 0)" w="w-[158px]" />
        <SmallTab label="对比 (- | - | -)" w="w-[159px]" />
        <div className="h-px grow bg-[#7c7a98]" />
      </div>

      {/* Status bar */}
      <div className="flex h-[29px] shrink-0 items-center justify-end border-b-2 border-[#b9b9c2] text-[18px] leading-[26px] font-light text-[#0a0a50]">
        <div className="h-[23px] w-[237px] border-l border-[#9a9aa2] pl-[6px]"><T>Test.Mesrd1, --- (MESRD1)</T></div>
        <div className="h-[23px] w-[67px] border-l border-[#9a9aa2] pl-[6px]"><T>MESVAL</T></div>
        <div className="h-[23px] w-[56px] border-l border-[#9a9aa2] pl-[5px]"><T>11:03</T></div>
      </div>

      {/* Taskbar */}
      <div className="flex h-[60px] shrink-0 bg-[#1f1a1d]">
        <div className="flex w-[72px] items-center justify-center">
          <svg width="24" height="24" fill="#fff">
            <path d="M0 3.4l10-1.4v9.5H0zM11 1.8L24 0v11.5H11zM0 12.5h10V22L0 20.6zM11 12.5h13V24l-13-1.8z" />
          </svg>
        </div>
        <div className="flex w-[76px] items-center justify-center pr-[4px]">
          <svg width="26" height="26" fill="none" stroke="#fff" strokeWidth="1.6">
            <circle cx="16" cy="9" r="7.5" />
            <path d="M11 15L1 25" />
          </svg>
        </div>
        {tasks.map((t) => (
          <Task key={t.icon} {...t} />
        ))}
        <div className="ml-auto flex items-center text-white">
          <svg width="18" height="10" className="mr-[14px]" fill="none" stroke="#fff" strokeWidth="1.4">
            <path d="M1 9l8-8 8 8" />
          </svg>
          <svg width="26" height="20" className="mr-[11px]" fill="none" stroke="#fff" strokeWidth="1.2">
            <path d="M7 2.5h17v12H5V9M15 14.5V18M10 18.5h10M1.5 2.5h5v6h-5zM4 4v3" />
          </svg>
          <svg width="22" height="18" className="mr-[14px]" fill="none" stroke="#fff" strokeWidth="1.2">
            <path d="M1 6h3l5-5v16l-5-5H1zM13 6l7 7M20 6l-7 7" />
          </svg>
          <span className="mr-[23px] text-[19px] leading-[20px] font-bold">英</span>
          <svg width="24" height="24" className="mr-[24px]">
            <path d="M2 3l18-3q3 0 3 3l-1 16-17 5q-2 0-2-2z" fill="#f4511e" />
            <path d="M18 6c-8-2-11 4-6 5 8 2 4 8-5 5" stroke="#fff" strokeWidth="3.4" fill="none" />
          </svg>
          <div className="w-[96px] text-center font-['Open_Sans',sans-serif] text-[18.5px] leading-[28px] tracking-[0.2px]">
            <div>11:03</div>
            <div>2022/9/8</div>
          </div>
          <svg width="42" height="46" className="mr-[14px] ml-[27px]">
            <path d="M2 7h23v19H13l-3 4v-4H2z" fill="#fff" />
            <path d="M6 12h15M6 16.5h15M6 21h15" stroke="#1f1a1d" strokeWidth="1.3" />
            <circle cx="25" cy="29" r="15" fill="#39363a" fillOpacity="0.93" stroke="#777" />
            <text x="25" y="35" fontSize="17" fontWeight="bold" textAnchor="middle" fill="#fff" fontFamily="Open Sans">19</text>
          </svg>
          <div className="mr-[6px] h-[60px] w-px bg-[#777]" />
        </div>
      </div>
    </div>
  );
}
